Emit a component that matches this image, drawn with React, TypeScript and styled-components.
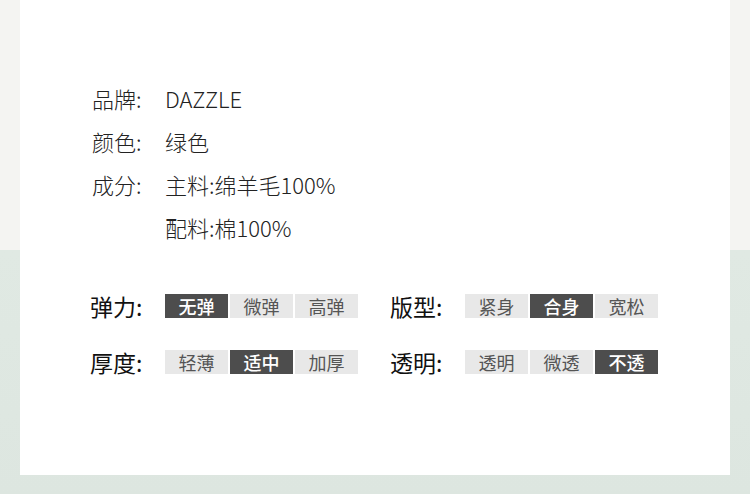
import React from "react";
import styled, { createGlobalStyle } from "styled-components";

const GlobalStyle = createGlobalStyle`
  html, body {
    margin: 0;
    padding: 0;
  }
  body {
    width: 750px;
    height: 494px;
    overflow: hidden;
    background: linear-gradient(to bottom, #f4f4f2 0, #f4f4f2 250px, #e0e9e3 250px, #dde6e0 100%);
    font-family: "Noto Sans CJK SC", "Noto Sans", sans-serif;
  }
`;

interface InfoRow {
  label: string;
  value: string;
}

interface TagGroup {
  label: string;
  options: string[];
  active: number;
}

const infoRows: InfoRow[] = [
  { label: "品牌:", value: "DAZZLE" },
  { label: "颜色:", value: "绿色" },
  { label: "成分:", value: "主料:绵羊毛100%" },
  { label: "", value: "配料:棉100%" },
];

const tagRows: TagGroup[][] = [
  [
    { label: "弹力:", options: ["无弹", "微弹", "高弹"], active: 0 },
    { label: "版型:", options: ["紧身", "合身", "宽松"], active: 1 },
  ],
  [
    { label: "厚度:", options: ["轻薄", "适中", "加厚"], active: 1 },
    { label: "透明:", options: ["透明", "微透", "不透"], active: 2 },
  ],
];

const App: React.FC = () => {
  return (
    <>
      <GlobalStyle />
      <Card>
        <InfoList>
          {infoRows.map((row, i) => (
            <InfoLine key={i}>
              <InfoLabel>{row.label}</InfoLabel>
              <InfoValue>{row.value}</InfoValue>
            </InfoLine>
          ))}
        </InfoList>
        <TagSection>
          {tagRows.map((groups, i) => (
            <TagLine key={i}>
              {groups.map((g) => (
                <Group key={g.label}>
                  <GroupLabel>{g.label}</GroupLabel>
                  <TagList>
                    {g.options.map((opt, j) => (
                      <Tag key={opt} active={j === g.active}>
                        {opt}
                      </Tag>
                    ))}
                  </TagList>
                </Group>
              ))}
            </TagLine>
          ))}
        </TagSection>
      </Card>
    </>
  );
};

const Card = styled.div`
  margin: 0 20px;
  width: 710px;
  height: 475px;
  background: #ffffff;
  box-sizing: border-box;
  padding: 76px 0 0 72px;
`;

const InfoList = styled.div`
  display: flex;
  flex-direction: column;
`;

const InfoLine = styled.div`
  display: flex;
  height: 43px;
  align-items: center;
  font-size: 22px;
  font-weight: 300;
  color: #222;
`;

const InfoLabel = styled.div`
  width: 73px;
`;

const InfoValue = styled.div``;

const TagSection = styled.div`
  display: flex;
  flex-direction: column;
  gap: 32px;
  margin-top: 46px;
  margin-left: -2px;
`;

const TagLine = styled.div`
  display: flex;
  gap: 32px;
`;

const Group = styled.div`
  display: flex;
  align-items: center;
  height: 24px;
`;

const GroupLabel = styled.div`
  width: 75px;
  font-size: 23px;
  line-height: 24px;
  color: #111;
`;

const TagList = styled.div`
  display: flex;
  gap: 2px;
`;

const Tag = styled.div<{ active?: boolean }>`
  width: 63px;
  height: 24px;
  display: flex;
  align-items: center;
  justify-content: center;
  font-size: 18px;
  line-height: 24px;
  font-weight: ${(p) => (p.active ? 500 : 400)};
  background: ${(p) => (p.active ? "#4d4d4d" : "#e8e8e8")};
  color: ${(p) => (p.active ? "#ffffff" : "#555555")};
`;

export default App;
